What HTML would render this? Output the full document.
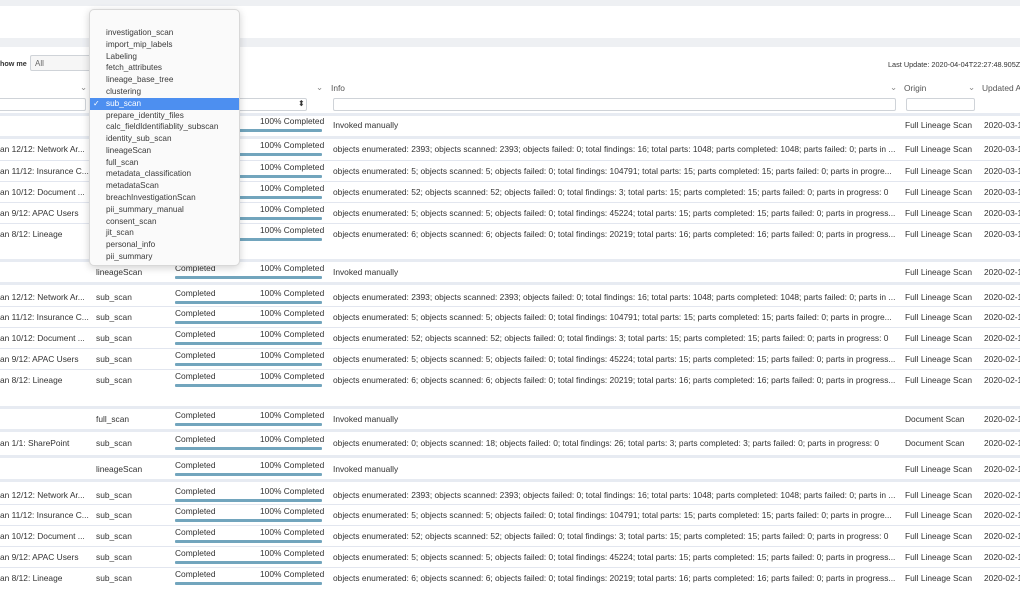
<!DOCTYPE html>
<html><head><meta charset="utf-8"><style>
*{margin:0;padding:0;box-sizing:border-box}
body{width:1020px;height:600px;overflow:hidden;background:#fff;font-family:"Liberation Sans",sans-serif;font-size:8.4px;color:#333;position:relative}
.a{position:absolute;white-space:nowrap}
.row{position:absolute;left:0;width:1020px;height:12px;line-height:12px}
.row span{position:absolute;white-space:nowrap}
.n{left:0}.t{left:96px}.i{left:333px}.o{left:905px}.d{left:984px}
.s1{left:175px;top:-4px}.s2{left:260px;top:-4px}
.bar{position:absolute;left:175px;top:10px;width:147px;height:3px;background:#72a5bd;border-radius:1px}
.sep{position:absolute;left:0;width:1020px;height:3px;background:#e7ebf2}
.ln{position:absolute;left:0;width:1020px;height:1px;background:#e2e6ef}
.inp{position:absolute;height:13px;border:1px solid #cfd3d8;border-radius:2px;background:#fff}
.dd{position:absolute;left:89px;top:9px;width:151px;height:257px;background:#fafafa;border:1px solid #d8d8d8;border-radius:5px;box-shadow:0 2px 8px rgba(0,0,0,.18)}
.dd div{position:absolute;left:16px;font-size:8.2px;color:#3a3a3a;line-height:12px}
.dd .hl{left:0;top:88px;width:149px;height:12px;background:#4d8ff0}
</style></head><body>
<div class="a" style="left:0;top:0;width:1020px;height:6px;background:#eef0f3"></div>
<div class="a" style="left:0;top:38px;width:1020px;height:9px;background:#eef0f3"></div>
<div class="a" style="left:0;top:59px;font-weight:bold;font-size:7.2px">how me</div>
<div class="inp" style="left:30px;top:55px;width:70px;height:16px;background:#f6f6f6"></div>
<div class="a" style="left:35px;top:59px;font-size:8px;color:#666">All</div>
<div class="a" style="left:888px;top:60px;font-size:7.3px">Last Update: 2020-04-04T22:27:48.905Z</div>
<div class="a" style="left:331px;top:83px;color:#555">Info</div>
<div class="a" style="left:904px;top:83px;color:#555">Origin</div>
<div class="a" style="left:982px;top:83px;color:#555">Updated A</div>
<div class="a" style="left:80px;top:82px;color:#888">⌄</div>
<div class="a" style="left:316px;top:82px;color:#888">⌄</div>
<div class="a" style="left:890px;top:82px;color:#888">⌄</div>
<div class="a" style="left:968px;top:82px;color:#888">⌄</div>
<div class="inp" style="left:-2px;top:98px;width:88px"></div>
<div class="inp" style="left:230px;top:98px;width:77px"></div>
<div class="a" style="left:298px;top:99px;font-size:8px">⬍</div>
<div class="inp" style="left:333px;top:98px;width:563px"></div>
<div class="inp" style="left:906px;top:98px;width:69px"></div>

<div class="sep" style="top:113px"></div>
<div class="row" style="top:119px"><span class="t">lineageScan</span><span class="s1">Completed</span><span class="s2">100% Completed</span><div class="bar"></div><span class="i">Invoked manually</span><span class="o">Full Lineage Scan</span><span class="d">2020-03-1</span></div>
<div class="sep" style="top:136px"></div>
<div class="row" style="top:143px"><span class="n">an 12/12: Network Ar...</span><span class="t">sub_scan</span><span class="s1">Completed</span><span class="s2">100% Completed</span><div class="bar"></div><span class="i">objects enumerated: 2393; objects scanned: 2393; objects failed: 0; total findings: 16; total parts: 1048; parts completed: 1048; parts failed: 0; parts in ...</span><span class="o">Full Lineage Scan</span><span class="d">2020-03-1</span></div>
<div class="ln" style="top:160px"></div>
<div class="row" style="top:165px"><span class="n">an 11/12: Insurance C...</span><span class="t">sub_scan</span><span class="s1">Completed</span><span class="s2">100% Completed</span><div class="bar"></div><span class="i">objects enumerated: 5; objects scanned: 5; objects failed: 0; total findings: 104791; total parts: 15; parts completed: 15; parts failed: 0; parts in progre...</span><span class="o">Full Lineage Scan</span><span class="d">2020-03-1</span></div>
<div class="ln" style="top:181px"></div>
<div class="row" style="top:186px"><span class="n">an 10/12: Document ...</span><span class="t">sub_scan</span><span class="s1">Completed</span><span class="s2">100% Completed</span><div class="bar"></div><span class="i">objects enumerated: 52; objects scanned: 52; objects failed: 0; total findings: 3; total parts: 15; parts completed: 15; parts failed: 0; parts in progress: 0</span><span class="o">Full Lineage Scan</span><span class="d">2020-03-1</span></div>
<div class="ln" style="top:202px"></div>
<div class="row" style="top:207px"><span class="n">an 9/12: APAC Users</span><span class="t">sub_scan</span><span class="s1">Completed</span><span class="s2">100% Completed</span><div class="bar"></div><span class="i">objects enumerated: 5; objects scanned: 5; objects failed: 0; total findings: 45224; total parts: 15; parts completed: 15; parts failed: 0; parts in progress...</span><span class="o">Full Lineage Scan</span><span class="d">2020-03-1</span></div>
<div class="ln" style="top:223px"></div>
<div class="row" style="top:228px"><span class="n">an 8/12: Lineage</span><span class="t">sub_scan</span><span class="s1">Completed</span><span class="s2">100% Completed</span><div class="bar"></div><span class="i">objects enumerated: 6; objects scanned: 6; objects failed: 0; total findings: 20219; total parts: 16; parts completed: 16; parts failed: 0; parts in progress...</span><span class="o">Full Lineage Scan</span><span class="d">2020-03-1</span></div>

<div class="sep" style="top:259px"></div>
<div class="row" style="top:266px"><span class="t">lineageScan</span><span class="s1">Completed</span><span class="s2">100% Completed</span><div class="bar"></div><span class="i">Invoked manually</span><span class="o">Full Lineage Scan</span><span class="d">2020-02-1</span></div>
<div class="sep" style="top:282px"></div>
<div class="row" style="top:291px"><span class="n">an 12/12: Network Ar...</span><span class="t">sub_scan</span><span class="s1">Completed</span><span class="s2">100% Completed</span><div class="bar"></div><span class="i">objects enumerated: 2393; objects scanned: 2393; objects failed: 0; total findings: 16; total parts: 1048; parts completed: 1048; parts failed: 0; parts in ...</span><span class="o">Full Lineage Scan</span><span class="d">2020-02-1</span></div>
<div class="ln" style="top:306px"></div>
<div class="row" style="top:311px"><span class="n">an 11/12: Insurance C...</span><span class="t">sub_scan</span><span class="s1">Completed</span><span class="s2">100% Completed</span><div class="bar"></div><span class="i">objects enumerated: 5; objects scanned: 5; objects failed: 0; total findings: 104791; total parts: 15; parts completed: 15; parts failed: 0; parts in progre...</span><span class="o">Full Lineage Scan</span><span class="d">2020-02-1</span></div>
<div class="ln" style="top:327px"></div>
<div class="row" style="top:332px"><span class="n">an 10/12: Document ...</span><span class="t">sub_scan</span><span class="s1">Completed</span><span class="s2">100% Completed</span><div class="bar"></div><span class="i">objects enumerated: 52; objects scanned: 52; objects failed: 0; total findings: 3; total parts: 15; parts completed: 15; parts failed: 0; parts in progress: 0</span><span class="o">Full Lineage Scan</span><span class="d">2020-02-1</span></div>
<div class="ln" style="top:348px"></div>
<div class="row" style="top:353px"><span class="n">an 9/12: APAC Users</span><span class="t">sub_scan</span><span class="s1">Completed</span><span class="s2">100% Completed</span><div class="bar"></div><span class="i">objects enumerated: 5; objects scanned: 5; objects failed: 0; total findings: 45224; total parts: 15; parts completed: 15; parts failed: 0; parts in progress...</span><span class="o">Full Lineage Scan</span><span class="d">2020-02-1</span></div>
<div class="ln" style="top:369px"></div>
<div class="row" style="top:374px"><span class="n">an 8/12: Lineage</span><span class="t">sub_scan</span><span class="s1">Completed</span><span class="s2">100% Completed</span><div class="bar"></div><span class="i">objects enumerated: 6; objects scanned: 6; objects failed: 0; total findings: 20219; total parts: 16; parts completed: 16; parts failed: 0; parts in progress...</span><span class="o">Full Lineage Scan</span><span class="d">2020-02-1</span></div>

<div class="sep" style="top:406px"></div>
<div class="row" style="top:413px"><span class="t">full_scan</span><span class="s1">Completed</span><span class="s2">100% Completed</span><div class="bar"></div><span class="i">Invoked manually</span><span class="o">Document Scan</span><span class="d">2020-02-1</span></div>
<div class="sep" style="top:429px"></div>
<div class="row" style="top:437px"><span class="n">an 1/1: SharePoint</span><span class="t">sub_scan</span><span class="s1">Completed</span><span class="s2">100% Completed</span><div class="bar"></div><span class="i">objects enumerated: 0; objects scanned: 18; objects failed: 0; total findings: 26; total parts: 3; parts completed: 3; parts failed: 0; parts in progress: 0</span><span class="o">Document Scan</span><span class="d">2020-02-1</span></div>
<div class="sep" style="top:455px"></div>
<div class="row" style="top:463px"><span class="t">lineageScan</span><span class="s1">Completed</span><span class="s2">100% Completed</span><div class="bar"></div><span class="i">Invoked manually</span><span class="o">Full Lineage Scan</span><span class="d">2020-02-1</span></div>
<div class="sep" style="top:479px"></div>
<div class="row" style="top:489px"><span class="n">an 12/12: Network Ar...</span><span class="t">sub_scan</span><span class="s1">Completed</span><span class="s2">100% Completed</span><div class="bar"></div><span class="i">objects enumerated: 2393; objects scanned: 2393; objects failed: 0; total findings: 16; total parts: 1048; parts completed: 1048; parts failed: 0; parts in ...</span><span class="o">Full Lineage Scan</span><span class="d">2020-02-1</span></div>
<div class="ln" style="top:504px"></div>
<div class="row" style="top:509px"><span class="n">an 11/12: Insurance C...</span><span class="t">sub_scan</span><span class="s1">Completed</span><span class="s2">100% Completed</span><div class="bar"></div><span class="i">objects enumerated: 5; objects scanned: 5; objects failed: 0; total findings: 104791; total parts: 15; parts completed: 15; parts failed: 0; parts in progre...</span><span class="o">Full Lineage Scan</span><span class="d">2020-02-1</span></div>
<div class="ln" style="top:525px"></div>
<div class="row" style="top:530px"><span class="n">an 10/12: Document ...</span><span class="t">sub_scan</span><span class="s1">Completed</span><span class="s2">100% Completed</span><div class="bar"></div><span class="i">objects enumerated: 52; objects scanned: 52; objects failed: 0; total findings: 3; total parts: 15; parts completed: 15; parts failed: 0; parts in progress: 0</span><span class="o">Full Lineage Scan</span><span class="d">2020-02-1</span></div>
<div class="ln" style="top:546px"></div>
<div class="row" style="top:551px"><span class="n">an 9/12: APAC Users</span><span class="t">sub_scan</span><span class="s1">Completed</span><span class="s2">100% Completed</span><div class="bar"></div><span class="i">objects enumerated: 5; objects scanned: 5; objects failed: 0; total findings: 45224; total parts: 15; parts completed: 15; parts failed: 0; parts in progress...</span><span class="o">Full Lineage Scan</span><span class="d">2020-02-1</span></div>
<div class="ln" style="top:567px"></div>
<div class="row" style="top:572px"><span class="n">an 8/12: Lineage</span><span class="t">sub_scan</span><span class="s1">Completed</span><span class="s2">100% Completed</span><div class="bar"></div><span class="i">objects enumerated: 6; objects scanned: 6; objects failed: 0; total findings: 20219; total parts: 16; parts completed: 16; parts failed: 0; parts in progress...</span><span class="o">Full Lineage Scan</span><span class="d">2020-02-1</span></div>

<div class="dd">
<div style="top:17px">investigation_scan</div>
<div style="top:29px">import_mip_labels</div>
<div style="top:41px">Labeling</div>
<div style="top:52px">fetch_attributes</div>
<div style="top:64px">lineage_base_tree</div>
<div style="top:76px">clustering</div>
<div class="hl"></div>
<div style="top:88px;color:#fff;left:3px">✓</div>
<div style="top:88px;color:#fff">sub_scan</div>
<div style="top:100px">prepare_identity_files</div>
<div style="top:111px">calc_fieldIdentifiablity_subscan</div>
<div style="top:123px">identity_sub_scan</div>
<div style="top:135px">lineageScan</div>
<div style="top:147px">full_scan</div>
<div style="top:158px">metadata_classification</div>
<div style="top:170px">metadataScan</div>
<div style="top:182px">breachInvestigationScan</div>
<div style="top:194px">pii_summary_manual</div>
<div style="top:206px">consent_scan</div>
<div style="top:217px">jit_scan</div>
<div style="top:229px">personal_info</div>
<div style="top:241px">pii_summary</div>
</div>
</body></html>
